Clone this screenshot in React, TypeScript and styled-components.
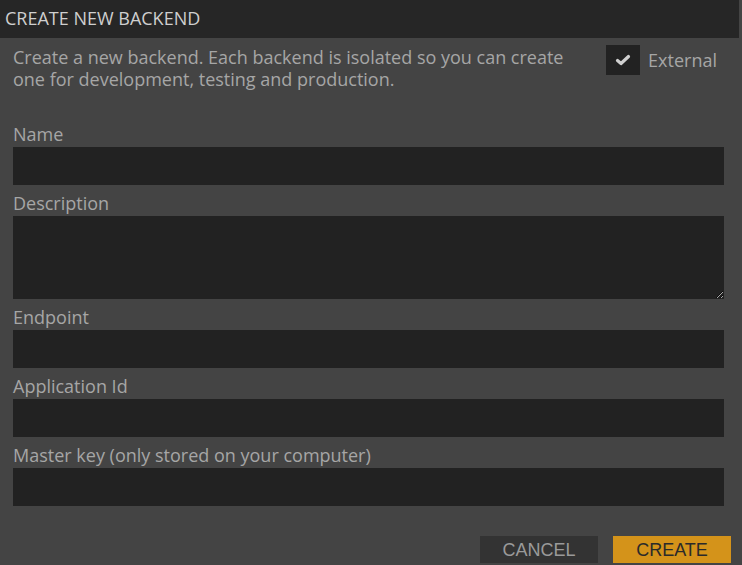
import React from "react";
import styled, { createGlobalStyle } from "styled-components";

const Global = createGlobalStyle`
  html, body { margin: 0; padding: 0; background: #444444; }
  body { font-family: "Open Sans", sans-serif; }
  * { box-sizing: border-box; }
`;

const Panel = styled.div`
  width: 742px;
  height: 565px;
  background: #444444;
  display: flex;
  flex-direction: column;
  overflow: hidden;
`;

const Header = styled.div`
  width: 739px;
  height: 38px;
  flex-shrink: 0;
  background: #262626;
  color: #cfcfcf;
  font-size: 18px;
  display: flex;
  align-items: center;
  padding-left: 5px;
  padding-bottom: 2px;
`;

const Body = styled.div`
  display: flex;
  flex-direction: column;
  padding: 8px 18px 0 13px;
`;

const Intro = styled.div`
  display: flex;
  justify-content: space-between;
  align-items: flex-start;
`;

const IntroText = styled.p`
  margin: 0;
  width: 560px;
  color: #a6a6a6;
  font-size: 18px;
  line-height: 22px;
`;

const CheckRow = styled.label`
  display: flex;
  align-items: center;
  gap: 8px;
  margin-top: -1px;
  margin-right: 7px;
  color: #a6a6a6;
  font-size: 18px;
`;

const CheckBox = styled.span`
  width: 34px;
  height: 30px;
  background: #222222;
  display: flex;
  align-items: center;
  justify-content: center;
`;

const Field = styled.div<{ $first?: boolean }>`
  display: flex;
  flex-direction: column;
  margin-top: ${(p) => (p.$first ? "32px" : "6px")};
`;

const Label = styled.span`
  color: #a6a6a6;
  font-size: 18px;
  line-height: 24px;
  margin-bottom: 1px;
`;

const Input = styled.input`
  height: 38px;
  width: 100%;
  border: none;
  outline: none;
  background: #222222;
  color: #ccc;
  font-family: "Open Sans", sans-serif;
  font-size: 16px;
  padding: 0 8px;
`;

const TextArea = styled.textarea`
  height: 83px;
  width: 100%;
  border: none;
  outline: none;
  background: #222222;
  color: #ccc;
  font-family: "Open Sans", sans-serif;
  font-size: 16px;
  padding: 6px 8px;
  display: block;
  resize: vertical;
`;

const Footer = styled.div`
  display: flex;
  justify-content: flex-end;
  gap: 15px;
  margin-top: 30px;
  margin-right: -7px;
`;

const Button = styled.button<{ $primary?: boolean }>`
  width: 118px;
  height: 27px;
  border: none;
  padding: 0;
  padding-top: 1px;
  font-family: "Liberation Sans", Arial, sans-serif;
  font-size: 18px;
  text-transform: uppercase;
  background: ${(p) => (p.$primary ? "#d4931a" : "#333333")};
  color: ${(p) => (p.$primary ? "#2a2a2a" : "#9a9a9a")};
  cursor: pointer;
`;

export default function App() {
  return (
    <Panel>
      <Global />
      <Header>CREATE NEW BACKEND</Header>
      <Body>
        <Intro>
          <IntroText>
            Create a new backend. Each backend is isolated so you can create one for development, testing and
            production.
          </IntroText>
          <CheckRow>
            <CheckBox>
              <svg width="16" height="14" viewBox="0 0 16 14">
                <path d="M2.5 7.5 L6 10.5 L13.5 3.5" fill="none" stroke="#d0d0d0" strokeWidth="3.2" strokeLinecap="round" strokeLinejoin="round" />
              </svg>
            </CheckBox>
            External
          </CheckRow>
        </Intro>
        <Field $first>
          <Label>Name</Label>
          <Input />
        </Field>
        <Field>
          <Label>Description</Label>
          <TextArea />
        </Field>
        <Field>
          <Label>Endpoint</Label>
          <Input />
        </Field>
        <Field>
          <Label>Application Id</Label>
          <Input />
        </Field>
        <Field>
          <Label>Master key (only stored on your computer)</Label>
          <Input />
        </Field>
        <Footer>
          <Button>Cancel</Button>
          <Button $primary>Create</Button>
        </Footer>
      </Body>
    </Panel>
  );
}
